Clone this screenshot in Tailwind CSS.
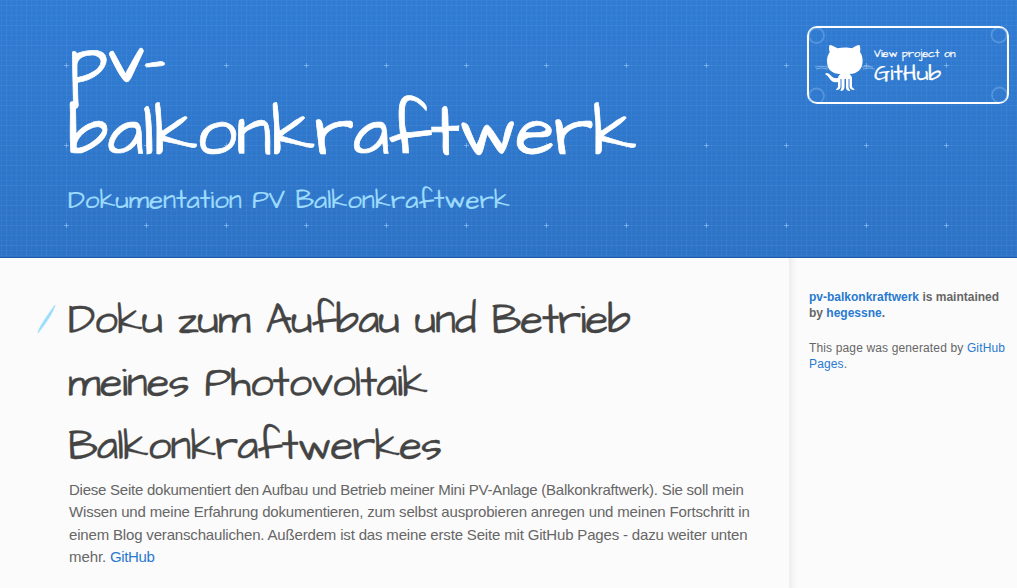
<!DOCTYPE html>
<html lang="de">
<head>
<meta charset="utf-8">
<title>pv-balkonkraftwerk</title>
<script src="https://cdn.jsdelivr.net/npm/@tailwindcss/browser@4"></script>
</head>
<body class="h-[588px] overflow-hidden bg-[#fbfbfb] font-['Liberation_Sans',Arial,sans-serif] text-[#666]">
<header class="relative h-[258px] border-b border-[#1e5aa6] bg-linear-to-b from-[#307cd3] to-[#2d73c5]">
  <svg class="absolute inset-0 h-full w-full" aria-hidden="true">
    <defs>
      <pattern id="fine" width="5" height="5" x="1" y="0" patternUnits="userSpaceOnUse"><path d="M.5 0V5M0 .5H5" stroke="#9cf" stroke-opacity=".05"/></pattern>
      <pattern id="grid" width="20" height="20" x="6" y="5" patternUnits="userSpaceOnUse"><path d="M.5 0V20M0 .5H20" stroke="#9cf" stroke-opacity=".05"/></pattern>
      <pattern id="plus" width="80" height="80" x="26" y="25" patternUnits="userSpaceOnUse"><path d="M40.500 38V43M38 40.500H43" stroke="#acd4fa" stroke-opacity=".5"/></pattern>
    </defs>
    <rect width="100%" height="100%" fill="url(#fine)"/><rect width="100%" height="100%" fill="url(#grid)"/><rect width="100%" height="100%" fill="url(#plus)"/>
  </svg>
  <div class="relative flex justify-between pl-[68px] pr-[8px] font-['Architects_Daughter','Lato',sans-serif]">
    <div class="pt-[25px]">
      <h1 class="text-[72px] leading-[72px] tracking-[-1px] text-white [-webkit-text-stroke:0.7px_white]">pv-<br>balkonkraftwerk</h1>
      <h2 class="mt-[14px] text-[26px] leading-[34px] text-[#9ddcff] [-webkit-text-stroke:0.2px_#9ddcff]">Dokumentation PV Balkonkraftwerk</h2>
    </div>
    <a class="relative mt-[26px] flex h-[78px] w-[202px] items-start rounded-[10px] border-2 border-white text-white">
      <svg class="absolute inset-0 h-[74px] w-[198px]" viewBox="809 28 198 74" fill="#fff">
        <g fill="none" stroke="#78afea" stroke-opacity=".5" stroke-width="1.800"><circle cx="816.500" cy="35.500" r="7.500"/><circle cx="999" cy="35" r="7.500"/><circle cx="816.500" cy="96" r="7.500"/><circle cx="999.500" cy="95" r="7.500"/></g>
        <path d="M815 67Q820 65.500 828 67M816 69Q821 67 828 69M862 67Q868 65.500 873 67M863 69Q869 67 875 69" fill="none" stroke="#8cbcf0" stroke-width=".8"/>
        <path d="M829.500 45C832 45 835 47 837.500 48.200C842 47.200 848 47.200 852 48.200C854.500 46.500 857.500 45 859.500 45C860.500 47.500 860.500 50 860 52C862 54.500 862.600 57.500 862.600 61C862.600 70 857 73.500 849.500 74.300C851.500 75.500 852 77 852 79V86C852 88.500 854.500 88 854.500 90C851 90 849.500 88.500 849.500 86.500V79H848.500V87C848.500 89 850 89 850 91C847 91 846 89.500 846 87V79H844.500V87C844.500 89.500 843 91 840.500 91C840.500 89 841.500 89 841.500 87V79H840.500V86.500C840.500 89 839 90 836 90C836 88.500 838 88.500 838 86V82C829 83.500 831 77 825.500 74.500Q824.500 73 827 73C831.500 74 831 79 838 78C838.200 76.300 839 75 840.500 74.300C832 73.500 827 70 827 61C827 57.500 828 54.500 829.700 52C829 50 828.700 47.500 829.500 45Z"/>
      </svg>
      <span class="relative ml-[65px] flex flex-col whitespace-nowrap pt-[19px] [-webkit-text-stroke:0.25px_white]"><span class="text-[11px] leading-[14px]">View project on</span><span class="text-[23px] leading-[24px]">GitHub</span></span>
    </a>
  </div>
</header>
<div class="flex h-[330px]">
  <main class="w-[789px] pl-[69px] pt-[32px]">
    <h1 class="relative -ml-px whitespace-nowrap font-['Architects_Daughter','Lato',sans-serif] text-[42px] leading-[63px] tracking-[-1px] text-[#444] [-webkit-text-stroke:0.3px_#444]">
      <svg class="absolute left-[-31px] top-[14px] h-[30px] w-[20px]" viewBox="37 304 20 30"><path d="M55 305Q53 314 38 333Q38 328 55 305Z" fill="#9df" stroke="#9df" stroke-width=".7"/></svg>
      Doku zum Aufbau und Betrieb<br>meines Photovoltaik<br>Balkonkraftwerkes</h1>
    <p class="whitespace-nowrap text-[15px] leading-[22.400px]"><span class="tracking-[-0.245px]">Diese Seite dokumentiert den Aufbau und Betrieb meiner Mini PV-Anlage (Balkonkraftwerk). Sie soll mein</span><br><span class="tracking-[-0.165px]">Wissen und meine Erfahrung dokumentieren, zum selbst ausprobieren anregen und meinen Fortschritt in</span><br><span class="tracking-[-0.17px]">einem Blog veranschaulichen. Außerdem ist das meine erste Seite mit GitHub Pages - dazu weiter unten</span><br><span class="tracking-[-0.1px]">mehr. <a class="tracking-[-0.4px] text-[#2879d0]">GitHub</a></span></p>
  </main>
  <aside class="flex-1 bg-[linear-gradient(to_right,#eeeeee,#fbfbfb_8px)] pl-[20px] pt-[31px] text-[12px] leading-4 whitespace-nowrap">
    <p class="font-bold"><a class="text-[#2879d0]">pv-balkonkraftwerk</a> is maintained<br>by <a class="text-[#2879d0]">hegessne</a>.</p>
    <p class="mt-[19px] tracking-[0.14px]">This page was generated by <a class="text-[#2879d0]">GitHub<br>Pages</a>.</p>
  </aside>
</div>
</body>
</html>
